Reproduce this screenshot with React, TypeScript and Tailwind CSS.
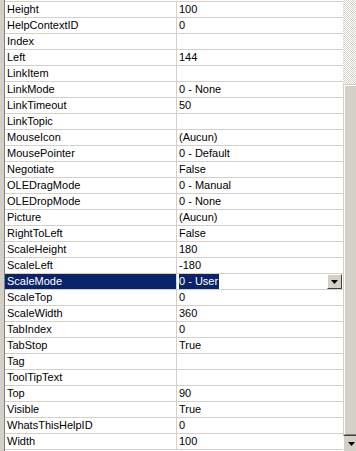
const props: [string, string][] = [
  ['Height', '100'],
  ['HelpContextID', '0'],
  ['Index', ''],
  ['Left', '144'],
  ['LinkItem', ''],
  ['LinkMode', '0 - None'],
  ['LinkTimeout', '50'],
  ['LinkTopic', ''],
  ['MouseIcon', '(Aucun)'],
  ['MousePointer', '0 - Default'],
  ['Negotiate', 'False'],
  ['OLEDragMode', '0 - Manual'],
  ['OLEDropMode', '0 - None'],
  ['Picture', '(Aucun)'],
  ['RightToLeft', 'False'],
  ['ScaleHeight', '180'],
  ['ScaleLeft', '-180'],
  ['ScaleMode', '0 - User'],
  ['ScaleTop', '0'],
  ['ScaleWidth', '360'],
  ['TabIndex', '0'],
  ['TabStop', 'True'],
  ['Tag', ''],
  ['ToolTipText', ''],
  ['Top', '90'],
  ['Visible', 'True'],
  ['WhatsThisHelpID', '0'],
  ['Width', '100'],
];

function DownArrow() {
  return (
    <svg width="7" height="4" viewBox="0 0 7 4">
      <path d="M0 0h7L3.5 4z" fill="#000" />
    </svg>
  );
}

function DropButton() {
  return (
    <div className="w-[15px] h-[15px] bg-[#d4d0c8] border border-t-white border-l-white border-r-[#404040] border-b-[#404040] flex items-center justify-center">
      <DownArrow />
    </div>
  );
}

export default function App() {
  return (
    <div
      className="w-[356px] h-[451px] overflow-hidden flex bg-white text-[11px] text-black"
      style={{ fontFamily: '"Liberation Sans", Arial, sans-serif' }}
    >
      {/* left frame */}
      <div className="w-[4px] bg-[#d4d0c8]" />
      <div className="w-px bg-[#808080]" />

      {/* grid */}
      <div className="flex-1 pt-px">
        <div className="border-t border-[#d4d0c8]">
          {props.map(([name, value]) => {
            const selected = name === 'ScaleMode';
            return (
              <div key={name} className="flex h-4 border-b border-[#d4d0c8] leading-[15px]">
                <div
                  className={
                    selected
                      ? 'w-[172px] pl-[2px] border-r border-[#d4d0c8] bg-[#0a246a] text-white whitespace-nowrap'
                      : 'w-[172px] pl-[2px] border-r border-[#d4d0c8] whitespace-nowrap'
                  }
                >
                  {name}
                </div>
                <div className="flex-1 pl-[2px] flex items-center whitespace-nowrap">
                  {selected ? (
                    <>
                      <span className="bg-[#0a246a] text-white pr-px">{value}</span>
                      <div className="ml-auto mr-[1px]">
                        <DropButton />
                      </div>
                    </>
                  ) : (
                    value
                  )}
                </div>
              </div>
            );
          })}
        </div>
      </div>

      {/* scrollbar */}
      <div className="w-[13px] flex flex-col">
        <div className="h-[84px] bg-[repeating-conic-gradient(#d4d0c8_0_25%,#ffffff_0_50%)] bg-[length:2px_2px]" />
        <div className="flex-1 bg-[#d4d0c8] border-l border-t border-l-[#d4d0c8] border-t-[#d4d0c8]">
          <div className="h-full border-l border-t border-white border-b border-b-[#808080]" />
        </div>
        <div className="h-4 bg-[#d4d0c8] border-t border-l border-t-[#404040] border-l-white flex items-center justify-center pl-[2px]">
          <DownArrow />
        </div>
      </div>
    </div>
  );
}
